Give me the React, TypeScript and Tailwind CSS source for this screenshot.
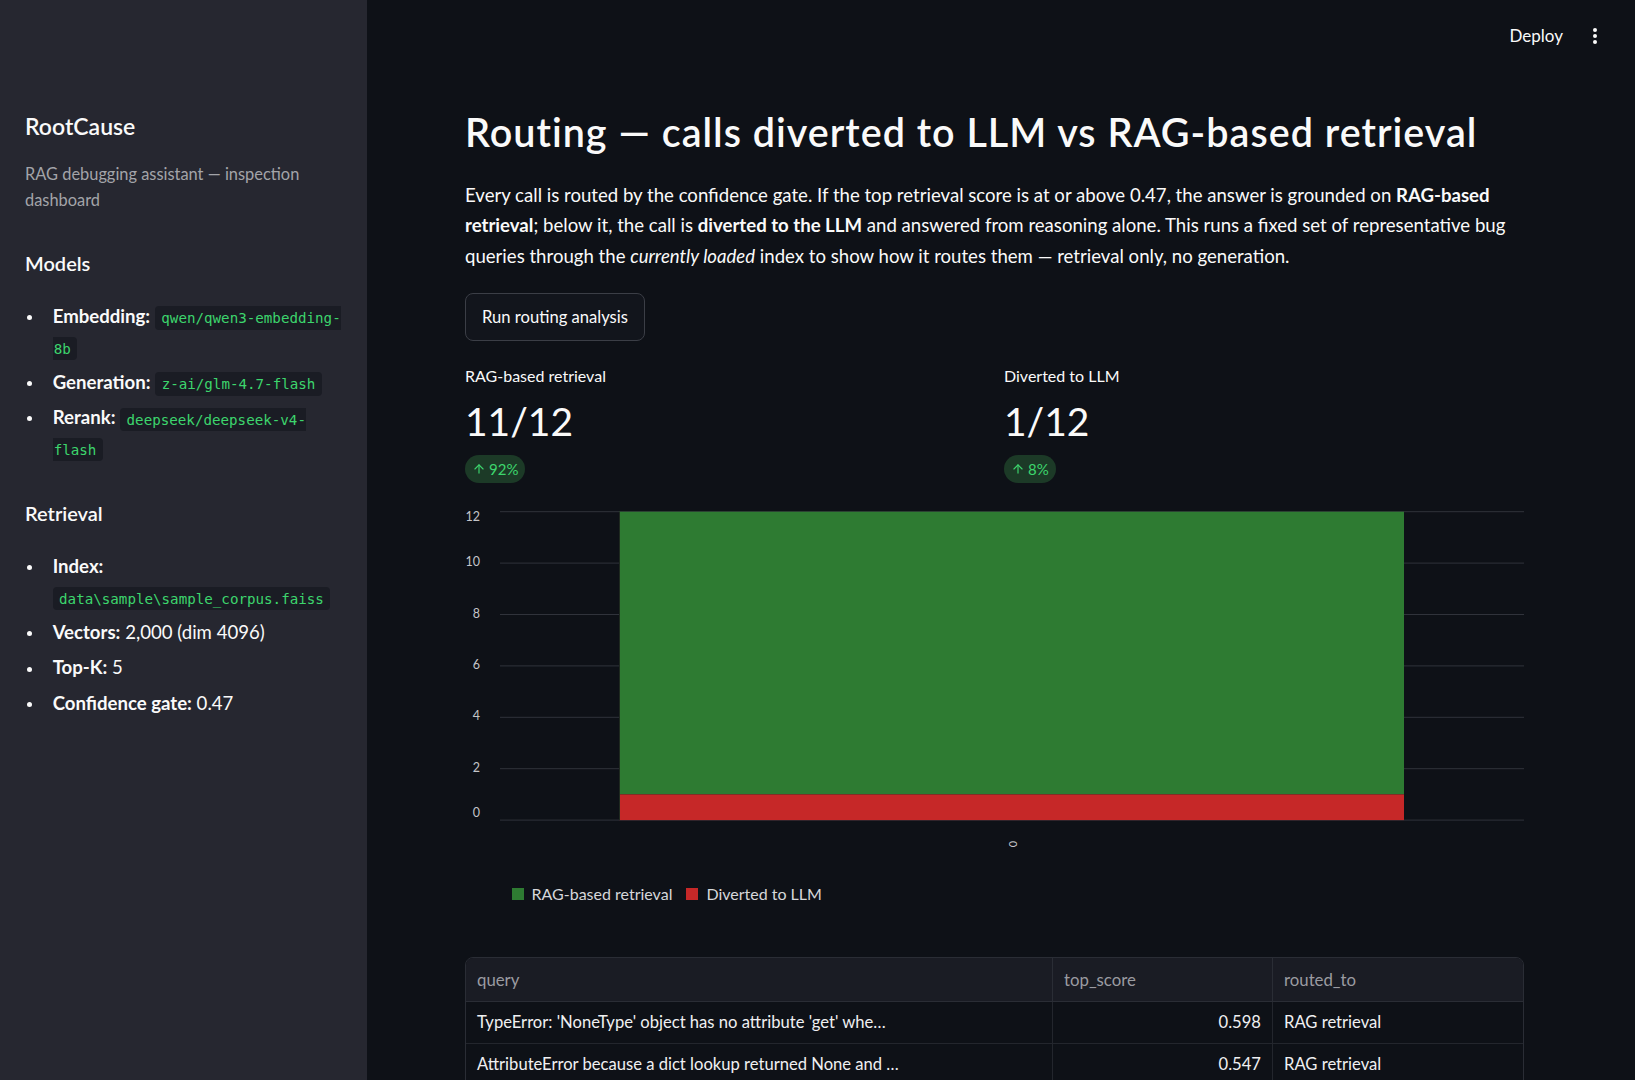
import React from "react";
import { ArrowUp } from "lucide-react";

const rows: [string, string, string][] = [
  ["TypeError: 'NoneType' object has no attribute 'get' whe…", "0.598", "RAG retrieval"],
  ["AttributeError because a dict lookup returned None and …", "0.547", "RAG retrieval"],
  ["KeyError raised when the config file is missing a requi…", "0.533", "RAG retrieval"],
  ["IndexError: list index out of range while paginating re…", "0.521", "RAG retrieval"],
  ["Connection pool exhausted under load after upgrading …", "0.509", "RAG retrieval"],
  ["UnicodeDecodeError when reading a CSV exported from …", "0.496", "RAG retrieval"],
];

function Code({ children, side }: { children: React.ReactNode; side?: "left" | "right" }) {
  const pad =
    side === "left"
      ? "pl-[6.4px] pr-0 rounded-l-[4px]"
      : side === "right"
      ? "pl-[1px] pr-[6.4px] rounded-r-[4px]"
      : "px-[6.4px] rounded-[4px]";
  return (
    <code
      className={`font-['DejaVu_Sans_Mono','Liberation_Mono',monospace] text-[14.2px] leading-none bg-[#1a1c24] text-[#3dd56d] py-[3.6px] ${pad}`}
    >
      {children}
    </code>
  );
}

function Item({ children }: { children: React.ReactNode }) {
  return (
    <li className="flex">
      <span className="w-[27.7px] shrink-0">
        <span className="block ml-[1.5px] mt-[14.3px] w-[5px] h-[5px] rounded-full bg-[#fafafa]" />
      </span>
      <div className="min-w-0">{children}</div>
    </li>
  );
}

function Sidebar() {
  return (
    <aside className="w-[367px] shrink-0 h-full bg-[#262730] pl-[25px] pr-[24px] pt-[110px] text-[#fafafa]">
      <h2 className="text-[23px] leading-[32px] font-semibold">RootCause</h2>
      <p className="mt-[19px] text-[16.4px] leading-[26px] text-[#a3a4a9]">
        RAG debugging assistant — inspection
        <br />
        dashboard
      </p>

      <h3 className="mt-[34.5px] text-[20px] leading-[30px] font-semibold">Models</h3>
      <ul className="mt-[23.5px] flex flex-col gap-[4.5px] text-[18.6px] leading-[30.7px]">
        <Item>
          <b>Embedding:</b> <Code side="left">qwen/qwen3-embedding-</Code>
          <br />
          <Code side="right">8b</Code>
        </Item>
        <Item>
          <b>Generation:</b> <Code>z-ai/glm-4.7-flash</Code>
        </Item>
        <Item>
          <b>Rerank:</b> <Code side="left">deepseek/deepseek-v4-</Code>
          <br />
          <Code side="right">flash</Code>
        </Item>
      </ul>

      <h3 className="mt-[34px] text-[20px] leading-[30px] font-semibold">Retrieval</h3>
      <ul className="mt-[23px] flex flex-col gap-[4.8px] text-[18.6px] leading-[30.7px]">
        <Item>
          <b>Index:</b>
          <br />
          <Code>data\sample\sample_corpus.faiss</Code>
        </Item>
        <Item>
          <b>Vectors:</b> 2,000 (dim 4096)
        </Item>
        <Item>
          <b>Top-K:</b> 5
        </Item>
        <Item>
          <b>Confidence gate:</b> 0.47
        </Item>
      </ul>
    </aside>
  );
}

function Metric({ label, value, delta }: { label: string; value: string; delta: string }) {
  return (
    <div>
      <div className="text-[16px] leading-[24px] text-[#fafafa]">{label}</div>
      <div className="mt-[9px] text-[39px] leading-[48px] font-normal text-[#fafafa]">{value}</div>
      <div className="mt-[10px] inline-flex h-[28px] items-center gap-[3px] px-[7px] rounded-full bg-[#1c3a27] text-[#3dd56d] text-[15px]">
        <ArrowUp size={14} strokeWidth={2} />
        <span>{delta}</span>
      </div>
    </div>
  );
}

// stacked bar: red 0→1, green 1→12
function RoutingChart() {
  const top = 10.7;
  const step = 51.4;
  const ticks = [12, 10, 8, 6, 4, 2, 0];
  const yOf = (v: number) => top + ((12 - v) / 2) * step;
  return (
    <svg width="1059" height="352" viewBox="0 0 1059 352" className="block">
      {ticks.map((t) => (
        <line key={t} x1="35" x2="1059" y1={yOf(t)} y2={yOf(t)} stroke="#30333b" strokeWidth="1" />
      ))}
      <rect x="154" y={yOf(12)} width="785" height={yOf(1) - yOf(12)} fill="#2e7b32" />
      <rect x="154" y={yOf(1)} width="785" height={yOf(0) - yOf(1)} fill="#c62828" />
      <line x1="154.5" x2="154.5" y1={yOf(12)} y2={yOf(0)} stroke="#1f2a20" strokeWidth="1" />
      {ticks.map((t) => {
        let y = yOf(t);
        if (t === 12) y += 6;
        if (t === 0) y -= 6;
        return (
          <text
            key={`l${t}`}
            x="15"
            y={y}
            textAnchor="end"
            dominantBaseline="middle"
            fill="#c4c5c9"
            fontSize="12.5"
            fontFamily="Lato, 'Noto Sans', sans-serif"
          >
            {t}
          </text>
        );
      })}
      <text
        x="0"
        y="0"
        transform="translate(549 343) rotate(-90)"
        textAnchor="middle"
        dominantBaseline="middle"
        fill="#c4c5c9"
        fontSize="11"
        fontFamily="Lato, 'Noto Sans', sans-serif"
      >
        0
      </text>
    </svg>
  );
}

function Legend() {
  return (
    <div className="mt-[31px] h-[20px] pl-[47px] flex items-center text-[16px] text-[#d6d7da]">
      <span className="w-[12px] h-[12px] bg-[#2e7b32]" />
      <span className="ml-[7.5px]">RAG-based retrieval</span>
      <span className="ml-[14px] w-[12px] h-[12px] bg-[#c62828]" />
      <span className="ml-[8px]">Diverted to LLM</span>
    </div>
  );
}

function RoutingTable() {
  return (
    <div className="mt-[53px] rounded-[8px] border border-[#2a2d35] overflow-hidden">
      <div className="grid grid-cols-[587px_220px_1fr] h-[44px] bg-[#1a1c24] text-[16.8px] text-[#9a9ba1] border-b border-[#2a2d35]">
        <div className="px-[11px] flex items-center border-r border-[#2a2d35]">query</div>
        <div className="px-[11px] flex items-center border-r border-[#2a2d35]">top_score</div>
        <div className="px-[11px] flex items-center">routed_to</div>
      </div>
      {rows.map((r, i) => (
        <div
          key={i}
          className="grid grid-cols-[587px_220px_1fr] h-[42px] text-[16.6px] text-[#f0f0f2] border-b border-[#23262d]"
        >
          <div className="px-[11px] flex items-center border-r border-[#23262d] whitespace-nowrap overflow-hidden">
            {r[0]}
          </div>
          <div className="px-[11px] flex items-center justify-end border-r border-[#23262d]">{r[1]}</div>
          <div className="px-[11px] flex items-center">{r[2]}</div>
        </div>
      ))}
    </div>
  );
}

export default function App() {
  return (
    <div className="h-screen w-full overflow-hidden flex bg-[#0e1117] text-[#fafafa] font-['Lato','Noto_Sans',sans-serif]">
      <Sidebar />
      <main className="flex-1 min-w-0 h-full overflow-hidden flex flex-col">
        <header className="h-[72px] shrink-0 flex items-center justify-end pr-[38px] gap-[30px]">
          <span className="text-[17px]">Deploy</span>
          <svg width="4" height="16" viewBox="0 0 4 16" className="block">
            <circle cx="2" cy="2" r="2" fill="#fafafa" />
            <circle cx="2" cy="8" r="2" fill="#fafafa" />
            <circle cx="2" cy="14" r="2" fill="#fafafa" />
          </svg>
        </header>
        <div className="pl-[98px] pr-[111px]">
          <h1 className="mt-[35.7px] text-[39.5px] leading-[48px] font-semibold tracking-[1px] whitespace-nowrap">
            Routing — calls diverted to LLM vs RAG-based retrieval
          </h1>
          <p className="mt-[24px] text-[18.6px] leading-[30.7px] whitespace-nowrap">
            Every call is routed by the confidence gate. If the top retrieval score is at or above 0.47, the answer is
            grounded on <b>RAG-based</b>
            <br />
            <b>retrieval</b>; below it, the call is <b>diverted to the LLM</b> and answered from reasoning alone. This
            runs a fixed set of representative bug
            <br />
            queries through the <i>currently loaded</i> index to show how it routes them — retrieval only, no
            generation.
          </p>
          <div className="mt-[21.7px]">
            <button className="block h-[47.7px] px-[16px] rounded-[8px] border border-[#3b3e46] bg-[#12151c] text-[16.6px] text-[#fafafa]">
              Run routing analysis
            </button>
          </div>
          <div className="mt-[23px] grid grid-cols-2 gap-[19px]">
            <Metric label="RAG-based retrieval" value="11/12" delta="92%" />
            <Metric label="Diverted to LLM" value="1/12" delta="8%" />
          </div>
          <div className="mt-[17.5px]">
            <RoutingChart />
          </div>
          <Legend />
          <RoutingTable />
        </div>
      </main>
    </div>
  );
}
